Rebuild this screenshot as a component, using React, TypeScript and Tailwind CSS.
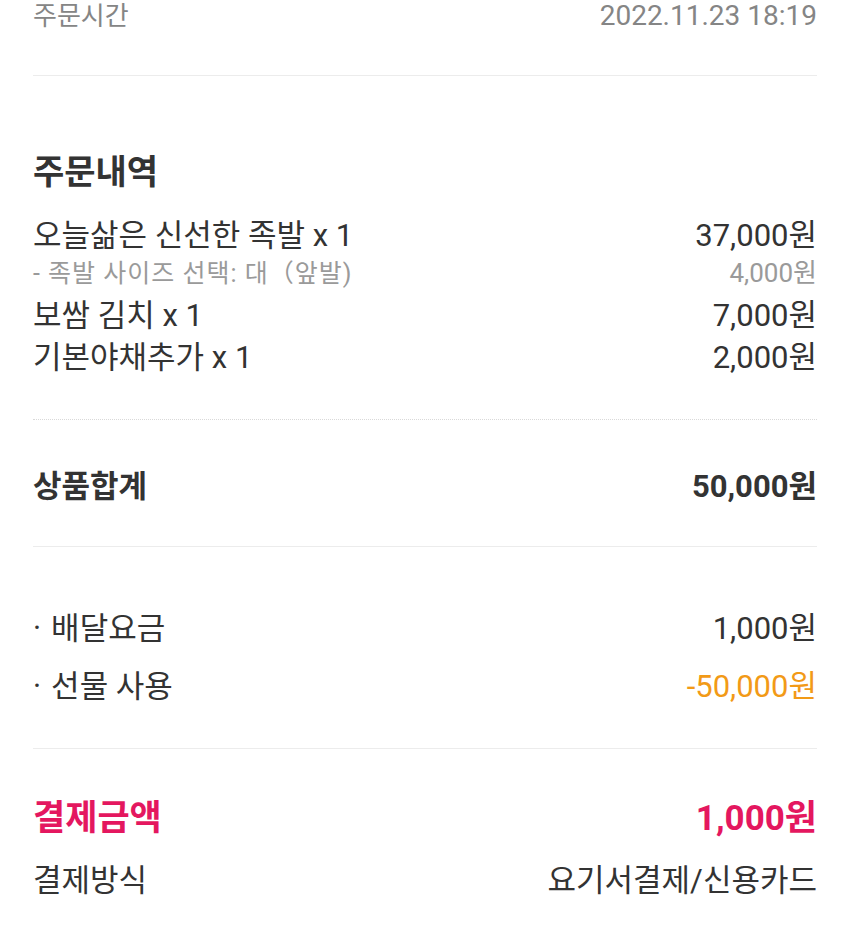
import React from "react"

interface LineItem {
  label: string
  amount: string
  /** option rows are smaller and grey */
  sub?: boolean
}

const items: LineItem[] = [
  { label: "오늘삶은 신선한 족발 x 1", amount: "37,000원" },
  { label: "- 족발 사이즈 선택: 대（앞발)", amount: "4,000원", sub: true },
  { label: "보쌈 김치 x 1", amount: "7,000원" },
  { label: "기본야채추가 x 1", amount: "2,000원" },
]

const font = { fontFamily: '"Roboto", "Noto Sans CJK KR", sans-serif' }

export default function App() {
  return (
    <div className="w-[850px] h-[934px] overflow-hidden bg-white px-[33px] text-[#333]" style={font}>
      {/* order time */}
      <div className="flex h-[32px] items-center justify-between leading-none text-[#858585]">
        <span className="text-[26px]">주문시간</span>
        <span className="text-[28px]">2022.11.23 18:19</span>
      </div>
      <div className="mt-[43px] h-px bg-[#ececec]" />

      {/* order list */}
      <div className="mt-[76px] flex h-[40px] items-center leading-none">
        <span className="text-[34px] font-bold">주문내역</span>
      </div>
      <div className="mt-[22px]">
        {items.map((item) =>
          item.sub ? (
            <div key={item.label} className="mb-[4px] flex h-[34px] items-center justify-between leading-none text-[#9a9a9a]">
              <span className="text-[25px] tracking-[1px]">{item.label}</span>
              <span className="text-[26px]">{item.amount}</span>
            </div>
          ) : (
            <div key={item.label} className="flex h-[42px] items-center justify-between leading-none">
              <span className="text-[31px]">{item.label}</span>
              <span className="text-[31px]">{item.amount}</span>
            </div>
          )
        )}
      </div>
      <div className="mt-[41px] border-t border-dotted border-[#d9d9d9]" />

      {/* subtotal */}
      <div className="mt-[46px] flex h-[40px] items-center justify-between leading-none font-bold">
        <span className="text-[31px]">상품합계</span>
        <span className="text-[31px]">50,000원</span>
      </div>
      <div className="mt-[40px] h-px bg-[#ececec]" />

      {/* fees */}
      <div className="mt-[61px] flex h-[40px] items-center justify-between leading-none text-[31px]">
        <span>
          ·<span className="ml-[10px]">배달요금</span>
        </span>
        <span>1,000원</span>
      </div>
      <div className="mt-[18px] flex h-[40px] items-center justify-between leading-none text-[31px]">
        <span>
          ·<span className="ml-[10px]">선물 사용</span>
        </span>
        <span className="text-[#f29a17]">-50,000원</span>
      </div>
      <div className="mt-[42px] h-px bg-[#ececec]" />

      {/* payment */}
      <div className="mt-[49px] flex h-[40px] items-center justify-between leading-none font-bold text-[#e4175f]">
        <span className="text-[35px]">결제금액</span>
        <span className="text-[35px]">1,000원</span>
      </div>
      <div className="mt-[22px] flex h-[40px] items-center justify-between leading-none text-[31px]">
        <span>결제방식</span>
        <span>요기서결제/신용카드</span>
      </div>
    </div>
  )
}
